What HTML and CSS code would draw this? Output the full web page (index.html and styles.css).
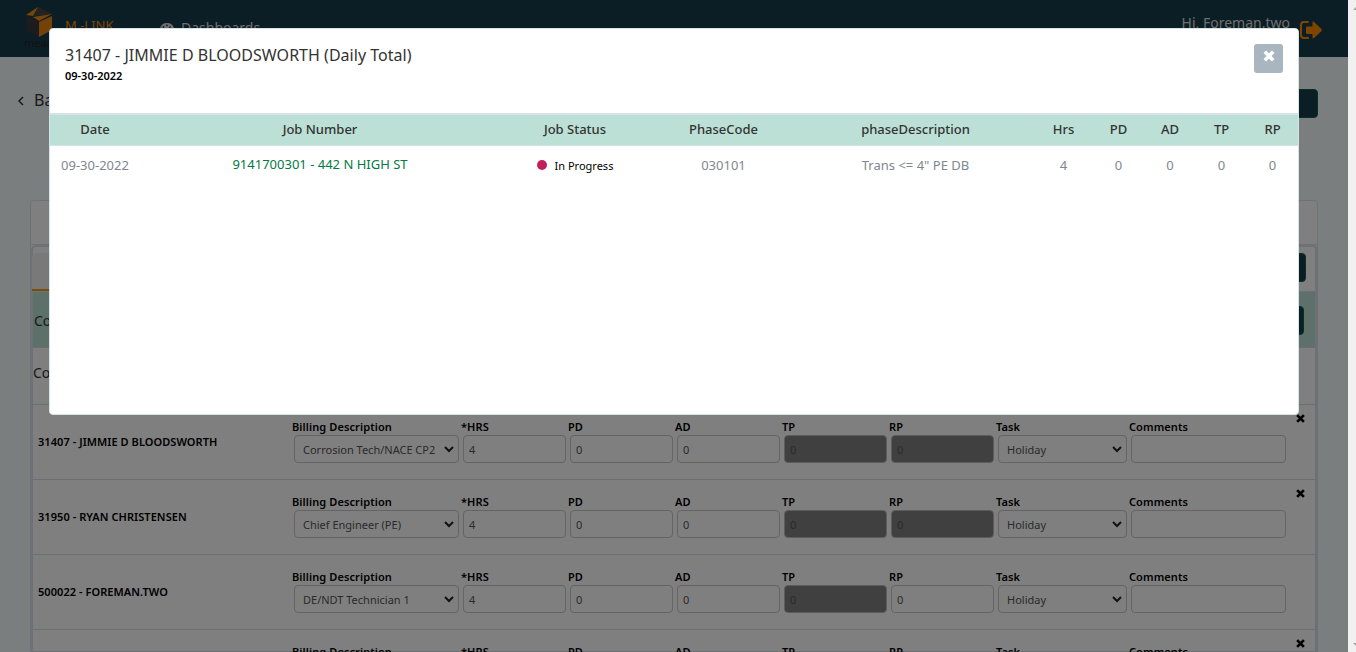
FILE: index.html
```
<!DOCTYPE html>
<html lang="en">
<head>
<meta charset="utf-8">
<title>M-Link</title>
<link rel="stylesheet" href="styles.css">
</head>
<body>
<div class="page">
  <header class="topbar">
    <div class="logo">
      <svg width="28" height="31" viewBox="0 0 28 31">
        <path fill="#3a3838" d="M1 9 14 15V30L2 24z"/>
        <path fill="#e8820c" d="M14 15 27 9V23L14 30z"/>
        <path fill="#4b4541" d="M13 0 27 7 9 9z"/>
        <path fill="#ef8a12" d="M1 8 13 0 8 9zM8 10 27 7 14 14z"/>
      </svg>
      <span class="logo-name">mears</span>
    </div>
    <span class="brand">M -LINK</span>
    <div class="nav-item">
      <svg width="14" height="12" viewBox="0 0 14 12"><path fill="#ddd" d="M7 0a7 7 0 0 0-6 11h12A7 7 0 0 0 7 0z"/><g fill="#183c4a"><circle cx="7" cy="2.3" r=".9"/><circle cx="3.4" cy="4" r=".9"/><circle cx="2.2" cy="7.5" r=".9"/><circle cx="11.8" cy="7.5" r=".9"/><path d="m10 3 1 .7L8 9H6z"/></g></svg>
      <span>Dashboards</span>
    </div>
    <span class="greeting">Hi, Foreman.two</span>
    <svg class="logout" width="22" height="18" viewBox="0 0 22 18"><path fill="none" stroke="#ff8a00" stroke-width="2" stroke-linecap="round" d="M8 1H4Q1 1 1 4V14Q1 17 4 17H8"/><path fill="#ff8a00" d="M6 6.500Q6 5.500 7 5.500H12.500V1.500Q12.500 0 14 1L21.500 8Q22 9 21.500 10L14 17Q12.500 18 12.500 16.500V13H7Q6 13 6 12z"/></svg>
  </header>
  <div class="back-row">
    <svg width="6" height="10" viewBox="0 0 6 10"><path fill="none" stroke="#333" stroke-width="1.500" d="M5 1 1 5 5 9"/></svg>
    <span class="back">Back</span>
    <span class="btn btn-wide"></span>
  </div>
  <main class="card">
    <div class="card-head"></div>
    <div class="panel">
      <div class="tabs"><span class="tab"></span><span class="btn"></span></div>
      <div class="crew"><span>Cost</span><span class="btn"></span></div>
      <div class="copy"><span>Copy</span></div>
      <div class="row">
        <div class="name">31407 - JIMMIE D BLOODSWORTH</div>
        <label>Billing Description<span class="field select">Corrosion Tech/NACE CP2<svg class="chev" viewBox="0 0 10 7"><path d="M1 1 5 5 9 1"/></svg></span></label>
        <label>*HRS<span class="field">4</span></label><label>PD<span class="field">0</span></label><label>AD<span class="field">0</span></label>
        <label>TP<span class="field off">0</span></label><label>RP<span class="field off">0</span></label>
        <label>Task<span class="field select">Holiday<svg class="chev" viewBox="0 0 10 7"><path d="M1 1 5 5 9 1"/></svg></span></label>
        <label>Comments<span class="field"></span></label>
        <svg class="remove" viewBox="0 0 8 8"><path d="M1 1 7 7M7 1 1 7"/></svg>
      </div>
      <div class="row">
        <div class="name">31950 - RYAN CHRISTENSEN</div>
        <label>Billing Description<span class="field select">Chief Engineer (PE)<svg class="chev" viewBox="0 0 10 7"><path d="M1 1 5 5 9 1"/></svg></span></label>
        <label>*HRS<span class="field">4</span></label><label>PD<span class="field">0</span></label><label>AD<span class="field">0</span></label>
        <label>TP<span class="field off">0</span></label><label>RP<span class="field off">0</span></label>
        <label>Task<span class="field select">Holiday<svg class="chev" viewBox="0 0 10 7"><path d="M1 1 5 5 9 1"/></svg></span></label>
        <label>Comments<span class="field"></span></label>
        <svg class="remove" viewBox="0 0 8 8"><path d="M1 1 7 7M7 1 1 7"/></svg>
      </div>
      <div class="row">
        <div class="name">500022 - FOREMAN.TWO</div>
        <label>Billing Description<span class="field select">DE/NDT Technician 1<svg class="chev" viewBox="0 0 10 7"><path d="M1 1 5 5 9 1"/></svg></span></label>
        <label>*HRS<span class="field">4</span></label><label>PD<span class="field">0</span></label><label>AD<span class="field">0</span></label>
        <label>TP<span class="field off">0</span></label><label>RP<span class="field">0</span></label>
        <label>Task<span class="field select">Holiday<svg class="chev" viewBox="0 0 10 7"><path d="M1 1 5 5 9 1"/></svg></span></label>
        <label>Comments<span class="field"></span></label>
      </div>
      <div class="row">
        <div class="name"></div>
        <label>Billing Description</label><label>*HRS</label><label>PD</label><label>AD</label>
        <label>TP</label><label>RP</label><label>Task</label><label>Comments</label>
        <svg class="remove" viewBox="0 0 8 8"><path d="M1 1 7 7M7 1 1 7"/></svg>
      </div>
    </div>
  </main>
  <div class="backdrop"></div>
  <section class="modal">
    <div class="modal-head">
      <div>
        <h1>31407 - JIMMIE D BLOODSWORTH (Daily Total)</h1>
        <div class="date">09-30-2022</div>
      </div>
      <button class="close"><svg width="12" height="12" viewBox="0 0 10 10"><path d="M1.500 1.500 8.500 8.500M8.500 1.500 1.500 8.500"/></svg></button>
    </div>
    <div class="grid grid-head">
      <span>Date</span><span>Job Number</span><span>Job Status</span><span>PhaseCode</span><span>phaseDescription</span><span>Hrs</span><span>PD</span><span>AD</span><span>TP</span><span>RP</span>
    </div>
    <div class="grid grid-row">
      <span>09-30-2022</span><span class="job">9141700301 - 442 N HIGH ST</span><span class="status"><i class="dot"></i>In Progress</span><span>030101</span><span>Trans &lt;= 4" PE DB</span><span>4</span><span>0</span><span>0</span><span>0</span><span>0</span>
    </div>
  </section>
</div>
<div class="scrollbar"><i class="up"></i><i class="down"></i></div>
</body>
</html>
```
FILE: styles.css
```
* { box-sizing: border-box; }
body { margin: 0; width: 1356px; height: 652px; overflow: hidden; display: flex; font-family: "Noto Sans", "Open Sans", sans-serif; }
.page { position: relative; width: 1348px; height: 652px; overflow: hidden; background: #f4fcfe; }
.scrollbar { width: 8px; height: 652px; overflow: hidden; background: #f1f1f1; display: flex; flex-direction: column; justify-content: space-between; padding: 6px 0 5px 5px; }
.scrollbar i { width: 8px; height: 4px; flex: none; background: #a3a3a3; }
.up { clip-path: polygon(50% 0, 100% 100%, 0 100%); }
.down { clip-path: polygon(0 0, 100% 0, 50% 100%); }

.topbar { height: 57px; background: #183c4a; display: flex; align-items: flex-start; padding-left: 24px; }
.logo { width: 41px; padding-top: 7px; display: flex; flex-direction: column; }
.logo svg { margin-left: 1px; }
.logo-name { font-size: 11px; line-height: 12px; color: #222; margin-top: -1px; }
.brand { width: 95px; padding-top: 16px; font-size: 13px; line-height: 18px; color: #f28c13; }
.nav-item { display: flex; gap: 7px; padding-top: 18px; font-size: 14px; line-height: 20px; color: #ddd; }
.nav-item svg { margin-top: 5px; }
.greeting { margin-left: auto; padding-top: 13px; font-size: 14px; line-height: 20px; color: #ddd; }
.logout { margin: 21px 26px 0 10px; }

.btn { width: 30px; height: 29px; background: #183c4a; border: 1px solid #12603f; border-radius: 4px; }
.back-row { height: 143px; display: flex; padding: 32px 30px 0 18px; }
.back-row svg { margin-top: 7px; }
.back { margin-left: 10px; font-size: 16px; line-height: 22px; color: #333; }
.btn-wide { width: 80px; margin-left: auto; }

.card { margin: 0 30px; height: 452px; border: 1px solid #dbe5ec; border-radius: 4px 4px 0 0; background: #fff; }
.card-head { height: 44px; border-bottom: 1px solid #dbe5ec; }
.panel { border: 2px solid #dbe0ec; border-right-width: 3px; border-radius: 5px 5px 0 0; height: 410px; margin-right: -1px; }
.tabs { height: 45px; display: flex; justify-content: space-between; padding: 6px 9px 0 0; border-bottom: 1px solid #dbe0e6; }
.tab { width: 160px; height: 38px; margin-left: -1px; background: #f3f3f3; border-bottom: 2px solid #f49a0a; border-radius: 5px 5px 0 0; }
.crew { height: 56px; display: flex; justify-content: space-between; align-items: center; padding: 2px 11px 0 1px; background: #bce0d5; font-size: 14px; color: #333; border-bottom: 1px solid #cfe0e2; }
.copy { height: 56px; padding: 15px 0 0; font-size: 14px; line-height: 20px; color: #333; }

.row { position: relative; height: 75px; border-top: 1px solid #d8dfe4; display: grid; grid-template-columns: 253px 165px 103px 103px 103px 103px 103px 129px 155px; column-gap: 4px; padding: 14px 0 0 4px; color: #000; font-size: 11px; font-weight: 600; }
.name { padding: 15px 0 0 1px; line-height: 15px; letter-spacing: .06px; white-space: nowrap; }
label { display: block; line-height: 16px; text-indent: -2px; letter-spacing: .1px; white-space: nowrap; }
.field { display: flex; align-items: center; height: 28px; padding: 2px 5px 0; border: 1px solid #c8c8c8; border-radius: 4px; font-weight: 400; color: #555; text-indent: 0; letter-spacing: 0; }
.select { padding: 2px 4px 0 8px; justify-content: space-between; }
.off { background: #808080; border-color: #bbb; }
.chev { width: 10px; height: 7px; margin-bottom: 2px; fill: none; stroke: #222; stroke-width: 2; }
.remove { position: absolute; right: 10px; top: 9px; width: 9px; height: 9px; stroke: #000; stroke-width: 2.4; }

.backdrop { position: absolute; inset: 0; background: rgba(0, 0, 0, .5); }
.modal { position: absolute; left: 49px; top: 28px; width: 1250px; height: 387px; background: #fff; border: 1px solid #d6e3e8; border-radius: 4px; }
.modal-head { height: 84px; display: flex; justify-content: space-between; padding: 15px 15px 0; }
h1 { margin: 0; font-size: 16px; line-height: 22px; font-weight: 400; letter-spacing: .025px; color: #333; }
.date { margin-top: 2px; font-size: 11px; line-height: 16px; font-weight: 600; color: #000; }
.close { width: 29px; height: 29px; padding: 0 0 3px; border: 0; border-radius: 3px; background: #a9b6c0; }
.close svg { stroke: #fff; stroke-width: 3; }
.grid { display: grid; grid-template-columns: 90px 360px 150px 147px 237px 59px 51px 52px 51px 51px; text-align: center; align-items: center; white-space: nowrap; font-size: 13px; }
.grid-head { height: 33px; padding-bottom: 3px; background: #bce0d5; border-top: 2px solid #d6e3e8; border-bottom: 1px solid #d6e3e8; font-weight: 500; color: #333; }
.grid-row { height: 40px; padding-bottom: 2px; color: #7e8790; }
.job { padding-bottom: 2px; color: #007b45; }
.status { display: flex; align-items: center; justify-content: center; gap: 8px; font-size: 11px; color: #000; }
.dot { width: 10px; height: 10px; border-radius: 50%; background: #c2205a; }
```
